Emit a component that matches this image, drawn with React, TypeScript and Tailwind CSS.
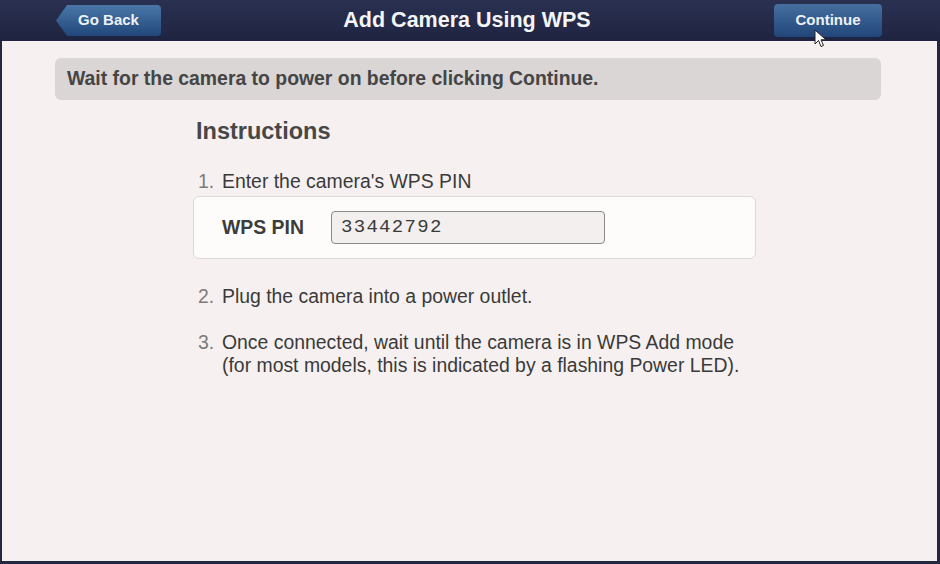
export default function App() {
  const steps = [
    { n: '2.', gap: 'mt-[26px]', text: ['Plug the camera into a power outlet.'] },
    {
      n: '3.',
      gap: 'mt-[23px]',
      text: [
        'Once connected, wait until the camera is in WPS Add mode',
        '(for most models, this is indicated by a flashing Power LED).',
      ],
    },
  ];

  return (
    <div className="relative h-[564px] w-[940px] overflow-hidden bg-[#22283f] font-['Liberation_Sans',Arial,sans-serif]">
      {/* Top bar */}
      <div className="flex h-[41px] items-center justify-between bg-gradient-to-b from-[#2a3050] to-[#1e2440] pl-[55px] pr-[58px]">
        <button className="relative flex h-[33px] w-[107px] items-center justify-center">
          <svg className="absolute inset-0" width="107" height="33" viewBox="0 0 107 33">
            <defs>
              <linearGradient id="gb" x1="0" y1="0" x2="0" y2="1">
                <stop offset="0" stopColor="#4a77a8" />
                <stop offset="1" stopColor="#21477a" />
              </linearGradient>
            </defs>
            <path d="M12 1 H102 Q106 1 106 5 V28 Q106 32 102 32 H12 L1 16.5 Z" fill="url(#gb)" />
          </svg>
          <span className="relative text-[15px] font-bold text-[#eef2f8]">Go Back</span>
        </button>
        <h1 className="-ml-[2px] text-[21.5px] font-bold text-[#f4f5f8]">Add Camera Using WPS</h1>
        <button className="flex h-[33px] w-[108px] items-center justify-center rounded-[4px] bg-gradient-to-b from-[#466f9f] to-[#22467a] text-[15px] font-bold text-[#eef2f8]">
          Continue
        </button>
      </div>

      {/* Content */}
      <div className="ml-[2px] mr-[3px] h-[520px] bg-[#f6f1f0] pt-[17px]">
        <div className="ml-[53px] mr-[56px] flex h-[42px] items-center rounded-[6px] bg-[#d9d6d5] px-[12px] text-[19.4px] font-bold text-[#454545]">
          Wait for the camera to power on before clicking Continue.
        </div>

        <div className="ml-[191px] mt-[17px] w-[563px]">
          <h2 className="ml-[3px] text-[23.5px] font-bold leading-[28px] text-[#474747]">Instructions</h2>

          <div className="mt-[25px] flex text-[19.4px] leading-[23px] text-[#3a3a3a]">
            <span className="w-[29px] shrink-0 pl-[5px] text-[#7c7c7c]">1.</span>
            <span>Enter the camera's WPS PIN</span>
          </div>

          <div className="mt-[3px] flex h-[63px] items-center rounded-[6px] border border-[#dcd9d8] bg-[#fdfcfb] pl-[28px]">
            <span className="w-[109px] text-[19.4px] font-bold text-[#3c3c3c]">WPS PIN</span>
            <div className="flex h-[33px] w-[274px] items-center rounded-[4px] border border-[#8a8a8a] bg-[#f3efee] px-[9px] font-['Liberation_Mono',monospace] text-[19px] tracking-[1.3px] text-[#3a3a3a]">
              33442792
            </div>
          </div>

          {steps.map((s) => (
            <div key={s.n} className={`${s.gap} flex text-[19.4px] leading-[23px] text-[#3a3a3a]`}>
              <span className="w-[29px] shrink-0 pl-[5px] text-[#7c7c7c]">{s.n}</span>
              <div>
                {s.text.map((t) => (
                  <div key={t}>{t}</div>
                ))}
              </div>
            </div>
          ))}
        </div>
      </div>

      {/* Mouse pointer */}
      <svg className="absolute left-[814px] top-[29px]" width="14" height="20" viewBox="0 0 14 20">
        <path d="M1 1 L1 15 L4.5 11.5 L7 17.5 L9.5 16.5 L7 10.8 L12 10.8 Z" fill="#fff" stroke="#222" strokeWidth="1" strokeLinejoin="round" />
      </svg>
    </div>
  );
}
